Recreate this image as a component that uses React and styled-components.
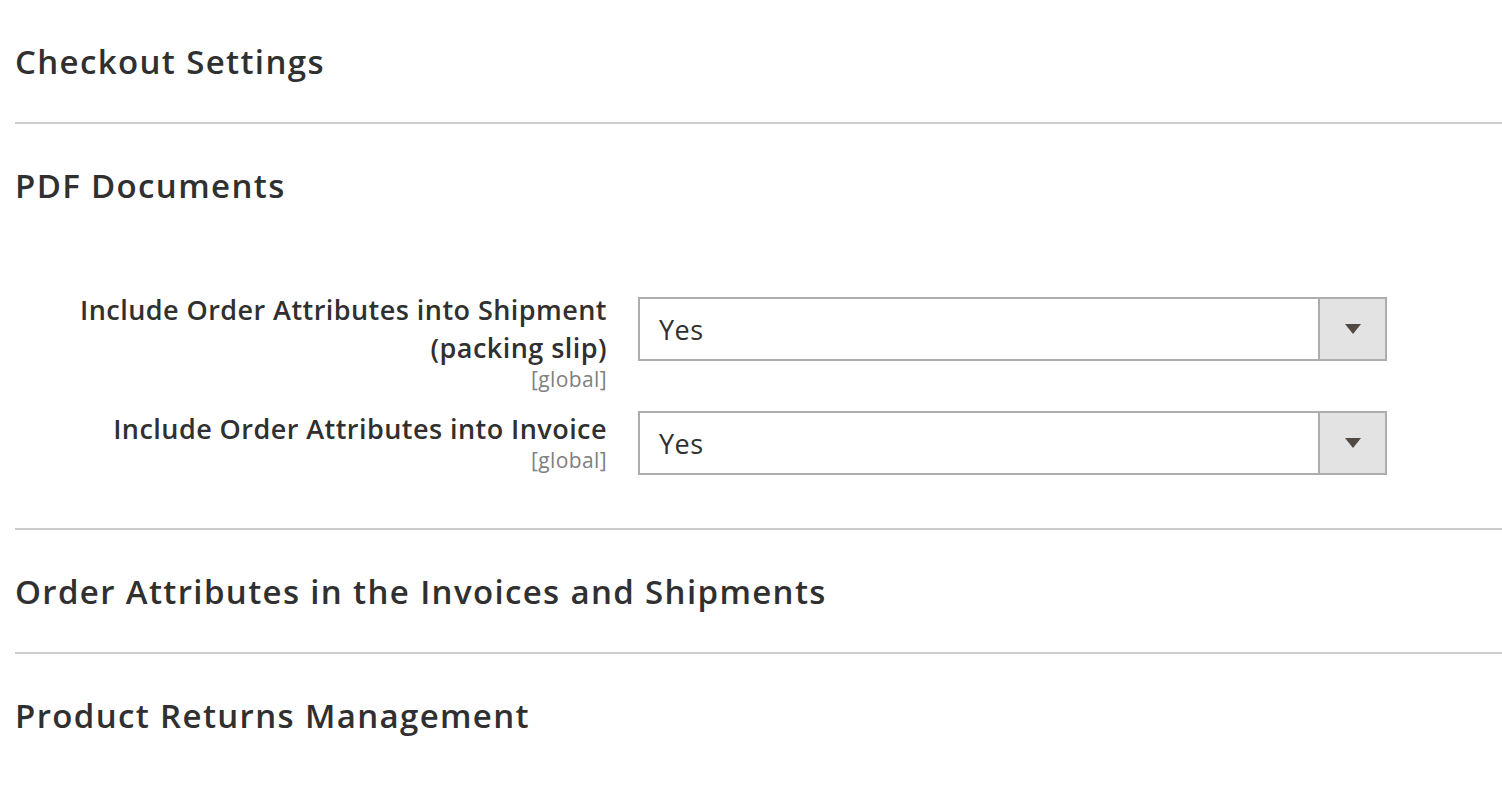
import React from 'react';
import styled, { createGlobalStyle } from 'styled-components';

const GlobalStyle = createGlobalStyle`
  html, body {
    margin: 0;
    padding: 0;
    background: #ffffff;
  }
  body {
    font-family: "Open Sans", "Noto Sans", sans-serif;
    color: #303030;
  }
`;

const Page = styled.div`
  padding-left: 15px;
`;

const Section = styled.section`
  border-bottom: ${({ $last }) => ($last ? 'none' : '2px solid #cccccc')};
`;

const SectionTitle = styled.h2`
  margin: 0;
  height: 122px;
  display: flex;
  align-items: center;
  font-size: 33px;
  font-weight: 600;
  letter-spacing: 1.36px;
  color: #303030;
`;

const Fieldset = styled.div`
  padding: 51px 0 53px;
  display: flex;
  flex-direction: column;
  gap: 20px;
`;

const Row = styled.div`
  display: grid;
  grid-template-columns: 592px 749px;
  column-gap: 31px;
  align-items: start;
`;

const LabelCol = styled.div`
  text-align: right;
  margin-top: ${({ $offset }) => $offset}px;
`;

const LabelText = styled.div`
  font-size: 27px;
  font-weight: 600;
  line-height: 38px;
  letter-spacing: 0.45px;
  color: #303030;
`;

const Scope = styled.div`
  font-size: 21px;
  line-height: 24px;
  letter-spacing: 0.4px;
  color: #808080;
`;

const Select = styled.div`
  height: 64px;
  box-sizing: border-box;
  border: 2px solid #adadad;
  display: flex;
  align-items: stretch;
  background: #ffffff;
`;

const Value = styled.div`
  flex: 1;
  display: flex;
  align-items: center;
  padding-left: 19px;
  font-size: 27px;
  letter-spacing: 0.5px;
  color: #303030;
`;

const Toggle = styled.div`
  width: 65px;
  border-left: 2px solid #adadad;
  background: #e3e3e3;
  display: flex;
  align-items: center;
  justify-content: center;
`;

const Arrow = () => (
  <svg width="16" height="10" viewBox="0 0 16 10">
    <path d="M0 0 H16 L8 10 Z" fill="#514943" />
  </svg>
);

const Field = ({ label, scope, offset }) => (
  <Row>
    <LabelCol $offset={offset}>
      {label.map(line => (
        <LabelText key={line}>{line}</LabelText>
      ))}
      <Scope>{scope}</Scope>
    </LabelCol>
    <Select>
      <Value>Yes</Value>
      <Toggle>
        <Arrow />
      </Toggle>
    </Select>
  </Row>
);

export default function App() {
  return (
    <>
      <GlobalStyle />
      <Page>
        <Section>
          <SectionTitle>Checkout Settings</SectionTitle>
        </Section>
        <Section>
          <SectionTitle>PDF Documents</SectionTitle>
          <Fieldset>
            <Field
              label={['Include Order Attributes into Shipment', '(packing slip)']}
              scope="[global]"
              offset={-6}
            />
            <Field
              label={['Include Order Attributes into Invoice']}
              scope="[global]"
              offset={-1}
            />
          </Fieldset>
        </Section>
        <Section>
          <SectionTitle>Order Attributes in the Invoices and Shipments</SectionTitle>
        </Section>
        <Section $last>
          <SectionTitle>Product Returns Management</SectionTitle>
        </Section>
      </Page>
    </>
  );
}
